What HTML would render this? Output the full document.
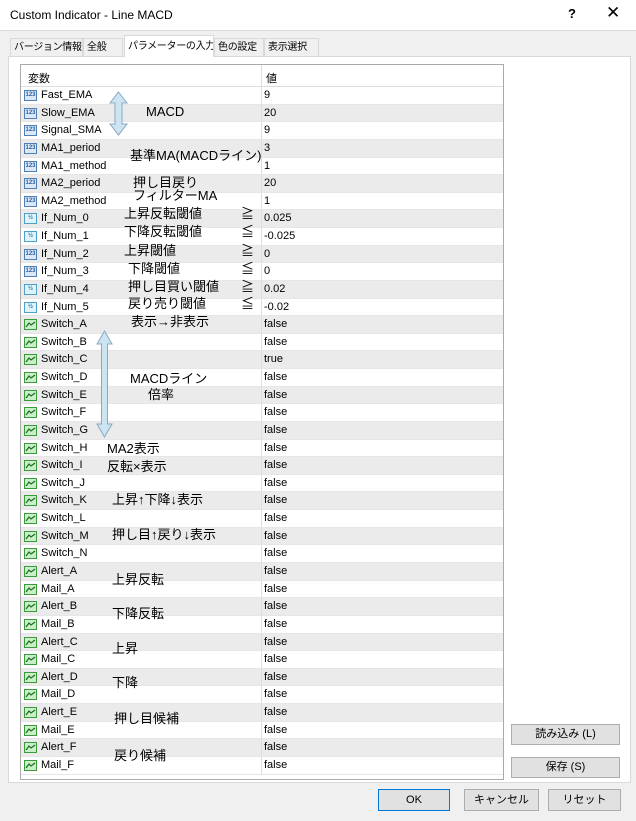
<html><head><style>
body{margin:0;width:636px;height:821px;background:#f0f0f0;font-family:"Liberation Sans","Noto Sans CJK JP",sans-serif;position:relative;overflow:hidden;font-size:11px;color:#000}
.a{position:absolute}
.title{left:0;top:0;width:636px;height:30px;background:#fff;border-bottom:1px solid #ddd}
.tab{position:absolute;top:38px;height:18px;border:1px solid #d9d9d9;border-bottom:none;background:#f0f0f0;font-size:10px;line-height:18px;padding:0 3px;box-sizing:border-box;white-space:nowrap;overflow:hidden;letter-spacing:-0.3px}
.panel{left:8px;top:56px;width:621px;height:725px;background:#fff;border:1px solid #d9d9d9}
.tbl{left:20px;top:64px;width:482px;height:714px;background:#fff;border:1px solid #aaa;overflow:hidden}
.row{position:absolute;left:0;width:482px;height:17.63px;border-bottom:1px solid #e6e6e6;box-sizing:border-box;line-height:17px;font-size:11px}
.row.g{background:#ebebeb}
.row .n{position:absolute;left:20px}
.row .v{position:absolute;left:243px}
.row .d{position:absolute;left:240px;top:0;bottom:0;border-left:1px solid #ddd}
.ic{position:absolute;left:3px;top:3px;width:13px;height:11px;box-sizing:border-box;font-size:6px;line-height:9px;text-align:center;font-weight:bold}
.i1{border:1px solid #4f7fb8;background:#dce8f6;color:#2a5ea0}
.i2{border:1px solid #4fa0c8;background:#e0f2fa;color:#2a80b0}
.i3{border:1px solid #3a9a3a;background:#c8efc8}
.ann{position:absolute;font-size:13px;line-height:14px;white-space:nowrap}
.btn{position:absolute;background:#e1e1e1;border:1px solid #adadad;text-align:center;font-size:11px;box-sizing:border-box}
</style></head><body>
<div class="a title"><span class="a" style="left:10px;top:8px;font-size:12px">Custom Indicator - Line MACD</span><span class="a" style="left:568px;top:6px;font-size:13px;font-weight:bold">?</span><span class="a" style="left:606px;top:3px;font-size:17px">✕</span></div>
<div class="a panel"></div>
<div class="tab" style="left:10px;width:73px">バージョン情報</div>
<div class="tab" style="left:83px;width:40px">全般</div>
<div class="tab" style="left:124px;top:35px;height:22px;width:90px;background:#fff;line-height:22px">パラメーターの入力</div>
<div class="tab" style="left:214px;width:50px">色の設定</div>
<div class="tab" style="left:264px;width:55px">表示選択</div>
<div class="a tbl" id="t">
<div class="a" style="left:0;top:0;width:482px;height:21px;border-bottom:1px solid #ddd"><span class="a" style="left:7px;top:5px">変数</span><span class="a" style="left:245px;top:5px">値</span><span class="a" style="left:240px;top:0;height:21px;border-left:1px solid #ddd"></span></div>
</div>
<script>
var P=[["Fast_EMA","9",1],["Slow_EMA","20",1],["Signal_SMA","9",1],["MA1_period","3",1],["MA1_method","1",1],["MA2_period","20",1],["MA2_method","1",1],["If_Num_0","0.025",2],["If_Num_1","-0.025",2],["If_Num_2","0",1],["If_Num_3","0",1],["If_Num_4","0.02",2],["If_Num_5","-0.02",2]];
"ABCDEFGHIJKLMN".split("").forEach(function(c){P.push(["Switch_"+c,c=="C"?"true":"false",3])});
"ABCDEF".split("").forEach(function(c){P.push(["Alert_"+c,"false",3]);P.push(["Mail_"+c,"false",3])});
var h="";P.forEach(function(p,i){var ic=p[2]==1?'<div class="ic i1">123</div>':p[2]==2?'<div class="ic i2">½</div>':'<div class="ic i3"><svg width="11" height="9" style="display:block"><path d="M1 7L4 3L6 5L10 2" stroke="#1a6a1a" fill="none" stroke-width="1.2"/></svg></div>';
h+='<div class="row'+(i%2?' g':'')+'" style="top:'+(22+i*17.63)+'px">'+ic+'<span class="n">'+p[0]+'</span><span class="d"></span><span class="v">'+p[1]+'</span></div>'});
document.getElementById("t").innerHTML+=h;
</script>
<svg class="a" style="left:0;top:0" width="636" height="821"><path d="M118.5 92L127 103H122V124H127L118.5 135L110 124H115V103H110Z" fill="#cde4f3" stroke="#8aa8c0"/><path d="M104.5 331L112 344H107.5V424H112L104.5 437L97 424H101.5V344H97Z" fill="#cde4f3" stroke="#8aa8c0"/></svg>
<div id="ann"></div>
<script>
var A=[["MACD",146,113],["基準MA(MACDライン)",130,157],["押し目戻り",133,184],["フィルターMA",133,197],["上昇反転閾値",124,215],["≧",241,215],["下降反転閾値",124,233],["≦",241,233],["上昇閾値",124,252],["≧",241,252],["下降閾値",128,270],["≦",241,270],["押し目買い閾値",128,288],["≧",241,288],["戻り売り閾値",128,305],["≦",241,305],["表示→非表示",131,323],["MACDライン",130,380],["倍率",148,396],["MA2表示",107,450],["反転×表示",107,468],["上昇↑下降↓表示",112,501],["押し目↑戻り↓表示",112,536],["上昇反転",112,581],["下降反転",112,615],["上昇",112,650],["下降",112,684],["押し目候補",114,720],["戻り候補",114,757]];
var s="";A.forEach(function(a){s+='<div class="ann" style="left:'+a[1]+'px;top:'+(a[2]-8)+'px">'+a[0]+'</div>'});document.getElementById("ann").innerHTML=s;
</script>
<div class="btn" style="left:511px;top:724px;width:109px;height:21px;line-height:19px">読み込み (L)</div>
<div class="btn" style="left:511px;top:757px;width:109px;height:21px;line-height:19px">保存 (S)</div>
<div class="btn" style="left:378px;top:789px;width:72px;height:22px;line-height:20px;border:1px solid #0078d7">OK</div>
<div class="btn" style="left:464px;top:789px;width:75px;height:22px;line-height:20px">キャンセル</div>
<div class="btn" style="left:548px;top:789px;width:73px;height:22px;line-height:20px">リセット</div>
</body></html>
